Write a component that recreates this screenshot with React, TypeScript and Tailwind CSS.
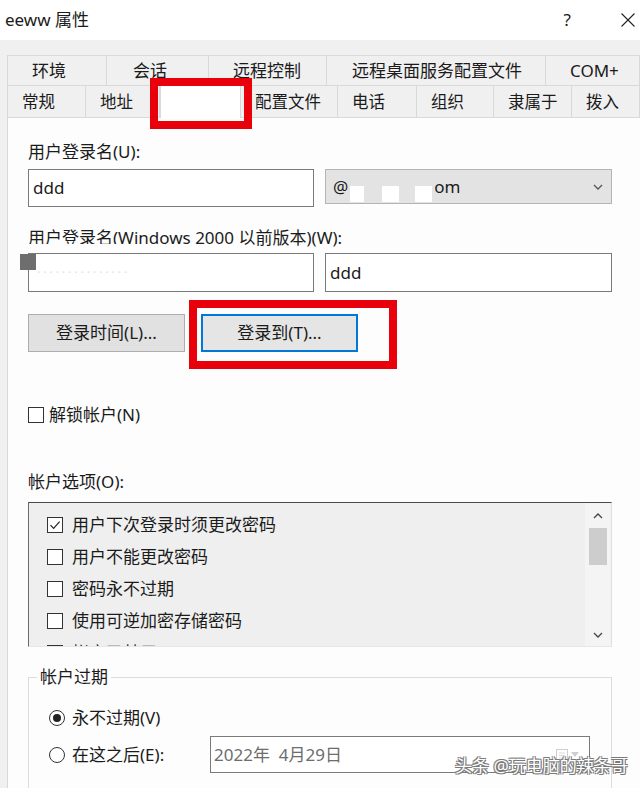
import React from 'react';

type Tab = { label: string; cls: string; selected?: boolean };

const topTabs: Tab[] = [
  { label: '环境', cls: 'w-[100px] pl-[24px]' },
  { label: '会话', cls: 'w-[102px] pl-[26px]' },
  { label: '远程控制', cls: 'w-[118px] pl-[24px]' },
  { label: '远程桌面服务配置文件', cls: 'w-[219px] pl-[25px]' },
  { label: 'COM+', cls: 'flex-1 pl-[24px]' },
];

const bottomTabs: Tab[] = [
  { label: '常规', cls: 'w-[79px]' },
  { label: '地址', cls: 'w-[74px]' },
  { label: '', cls: 'w-[81px]', selected: true },
  { label: '配置文件', cls: 'w-[97px]' },
  { label: '电话', cls: 'w-[79px]' },
  { label: '组织', cls: 'w-[77px]' },
  { label: '隶属于', cls: 'w-[78px]' },
  { label: '拨入', cls: 'flex-1' },
];

const options = [
  { label: '用户下次登录时须更改密码', checked: true },
  { label: '用户不能更改密码' },
  { label: '密码永不过期' },
  { label: '使用可逆加密存储密码' },
  { label: '帐户已禁用' },
];

function Box({ checked }: { checked?: boolean }) {
  return (
    <span className="flex h-[16px] w-[16px] shrink-0 items-center justify-center border border-[#333] bg-white">
      {checked && (
        <svg width="12" height="12" viewBox="0 0 12 12">
          <path d="M1.5 6.2 L4.6 9.3 L10.6 2.6" fill="none" stroke="#222" strokeWidth="1.2" />
        </svg>
      )}
    </span>
  );
}

function Radio({ on }: { on?: boolean }) {
  return (
    <span className="flex h-[16px] w-[16px] shrink-0 items-center justify-center rounded-full border border-[#333] bg-white">
      {on && <span className="h-[8px] w-[8px] rounded-full bg-[#222]" />}
    </span>
  );
}

function Chevron({ up, color = '#555' }: { up?: boolean; color?: string }) {
  return (
    <svg width="10" height="6" viewBox="0 0 10 6">
      <path d={up ? 'M1 5 L5 1 L9 5' : 'M1 1 L5 5 L9 1'} fill="none" stroke={color} strokeWidth="1.3" />
    </svg>
  );
}

export default function App() {
  return (
    <div className="relative h-[788px] w-[640px] overflow-hidden bg-[#f0f0f0] font-['Noto_Sans','Noto_Sans_CJK_SC',sans-serif] text-[17px] text-[#1b1b1b]">
      {/* Title bar */}
      <div className="flex h-[40px] items-center bg-white pl-[5px]">
        <span className="leading-[20px]">eeww 属性</span>
        <span className="ml-auto mr-[50px] leading-[20px]">?</span>
        <svg className="mr-[5px]" width="14" height="14" viewBox="0 0 14 14">
          <path d="M0.5 0.5 L13.5 13.5 M13.5 0.5 L0.5 13.5" stroke="#222" strokeWidth="1.1" />
        </svg>
      </div>

      {/* Tabs */}
      <div className="pl-[7px] pt-[15px]">
        <div className="flex h-[30px]">
          {topTabs.map((t, i) => (
            <div
              key={t.label}
              className={`${t.cls} flex items-center border-t border-r border-[#d9d9d9] leading-[20px] ${i === 0 ? 'border-l' : ''}`}
            >
              {t.label}
            </div>
          ))}
        </div>
        <div className="flex h-[32px] items-start">
          {bottomTabs.map((t, i) =>
            t.selected ? (
              <div key="sel" className={`${t.cls} relative z-10 h-[33px] border-l border-r border-t border-[#d9d9d9] bg-white`} />
            ) : (
              <div
                key={t.label}
                className={`${t.cls} flex h-[32px] items-center border-t border-r border-[#d9d9d9] pl-[14px] text-[16.5px] leading-[20px] ${i === 0 ? 'border-l' : ''}`}
              >
                {t.label}
              </div>
            ),
          )}
        </div>

        {/* Panel */}
        <div className="relative h-[680px] border-l border-t border-[#d9d9d9] bg-[#fdfdfd] pl-[20px] pt-[24px]">
          <div className="h-[20px] leading-[20px]">用户登录名(U):</div>
          <div className="mt-[7px] flex items-start gap-[11px]">
            <div className="flex h-[38px] w-[286px] items-center border border-[#7a7a7a] bg-white px-[4px] leading-[20px]">ddd</div>
            <div className="flex h-[35px] w-[287px] items-center border border-[#b4b4b4] bg-[#e3e3e3] pl-[7px] pr-[8px] leading-[20px]">
              <span>@</span>
              <span className="ml-[2px] mt-[14px] h-[16px] w-[14px] bg-white" />
              <span className="ml-[18px] mt-[14px] h-[16px] w-[17px] bg-white" />
              <span className="ml-[16px] mt-[14px] h-[16px] w-[17px] bg-white" />
              <span className="ml-[2px]">om</span>
              <span className="ml-auto">
                <Chevron />
              </span>
            </div>
          </div>

          <div className="mt-[21px] h-[20px] leading-[20px]">用户登录名(Windows 2000 以前版本)(W):</div>
          <div className="mt-[5px] flex gap-[11px]">
            <div className="flex h-[39px] w-[286px] items-center border border-[#7a7a7a] bg-white px-[8px] text-[12px] tracking-[3px] text-[#e2e2e2]">
              ···············
            </div>
            <div className="flex h-[39px] w-[287px] items-center border border-[#7a7a7a] bg-white px-[4px] leading-[20px]">ddd</div>
          </div>

          <div className="mt-[22px] flex gap-[16px]">
            <button className="flex h-[38px] w-[157px] items-center justify-center border border-[#adadad] bg-[#e1e1e1] leading-[20px]">
              登录时间(L)...
            </button>
            <button className="flex h-[38px] w-[157px] items-center justify-center border-2 border-[#0078d7] bg-[#e5e5e5] leading-[20px]">
              登录到(T)...
            </button>
          </div>

          <div className="mt-[53px] flex h-[20px] items-center gap-[5px] leading-[20px]">
            <Box />
            <span>解锁帐户(N)</span>
          </div>

          <div className="mt-[47px] h-[20px] leading-[20px]">帐户选项(O):</div>
          <div className="mt-[10px] flex h-[145px] w-[584px] border-l border-t border-b border-r border-l-[#6a6a6a] border-t-[#4a4a4a] border-r-[#e0e0e0] border-b-[#e6e6e6] bg-[#efefef]">
            <div className="flex flex-1 flex-col overflow-hidden pl-[18px] pt-[6px]">
              {options.map((o) => (
                <div key={o.label} className="flex h-[32px] shrink-0 items-center gap-[9px] leading-[20px]">
                  <Box checked={o.checked} />
                  <span>{o.label}</span>
                </div>
              ))}
            </div>
            <div className="flex w-[26px] flex-col bg-[#f4f4f4]">
              <div className="flex h-[25px] items-center justify-center">
                <Chevron up color="#444" />
              </div>
              <div className="mx-[4px] h-[37px] bg-[#cdcdcd]" />
              <div className="flex-1" />
              <div className="flex h-[22px] items-center justify-center">
                <Chevron color="#444" />
              </div>
            </div>
          </div>

          <fieldset className="mt-[20px] h-[130px] w-[584px] border border-[#dcdcdc] p-0">
            <legend className="ml-[8px] px-[3px] leading-[20px]">帐户过期</legend>
            <div className="mt-[21px] flex h-[20px] items-center gap-[7px] pl-[20px] leading-[20px]">
              <Radio on />
              <span>永不过期(V)</span>
            </div>
            <div className="mt-[8px] flex h-[37px] items-center pl-[20px]">
              <div className="flex w-[161px] items-center gap-[7px] leading-[20px]">
                <Radio />
                <span>在这之后(E):</span>
              </div>
              <div className="flex h-[37px] w-[380px] items-center border border-[#7a7a7a] bg-white pl-[3px] pr-[10px] leading-[20px] text-[#6d6d6d]">
                <span>2022年&nbsp;&nbsp;4月29日</span>
                <span className="ml-auto flex items-center gap-[3px]">
                  <svg width="12" height="12" viewBox="0 0 12 12">
                    <rect x="0.5" y="0.5" width="11" height="11" fill="none" stroke="#cfcfcf" />
                    <path d="M3 4 H9 M3 6.5 H9 M3 9 H9" stroke="#d8d8d8" />
                  </svg>
                  <svg width="8" height="5" viewBox="0 0 8 5">
                    <path d="M0 0 L8 0 L4 5 Z" fill="#cfcfcf" />
                  </svg>
                </span>
              </div>
            </div>
          </fieldset>

          {/* Redaction over the legacy logon name */}
          <div className="absolute left-[12px] top-[126px] h-[9px] w-[118px] bg-[#fdfdfd]" />
          <div className="absolute left-[12px] top-[136px] h-[16px] w-[16px] bg-[#6e6e6e]" />

          {/* Red annotation around 登录到 */}
          <div className="absolute left-[181px] top-[182px] h-[69px] w-[208px] border-[8px] border-[#e8000b]" />
        </div>
      </div>

      {/* Red annotation around the hidden tab */}
      <div className="absolute left-[150px] top-[78px] z-20 h-[51px] w-[102px] border-[8px] border-[#e8000b]" />

      {/* Watermark */}
      <div className="absolute left-[455px] top-[755px] text-[17px] leading-[22px] text-white [text-shadow:-1px_-1px_0_#7a7a7a,1px_-1px_0_#7a7a7a,-1px_1px_0_#7a7a7a,1px_1px_0_#7a7a7a]">
        头条 @玩电脑的辣条哥
      </div>
    </div>
  );
}
